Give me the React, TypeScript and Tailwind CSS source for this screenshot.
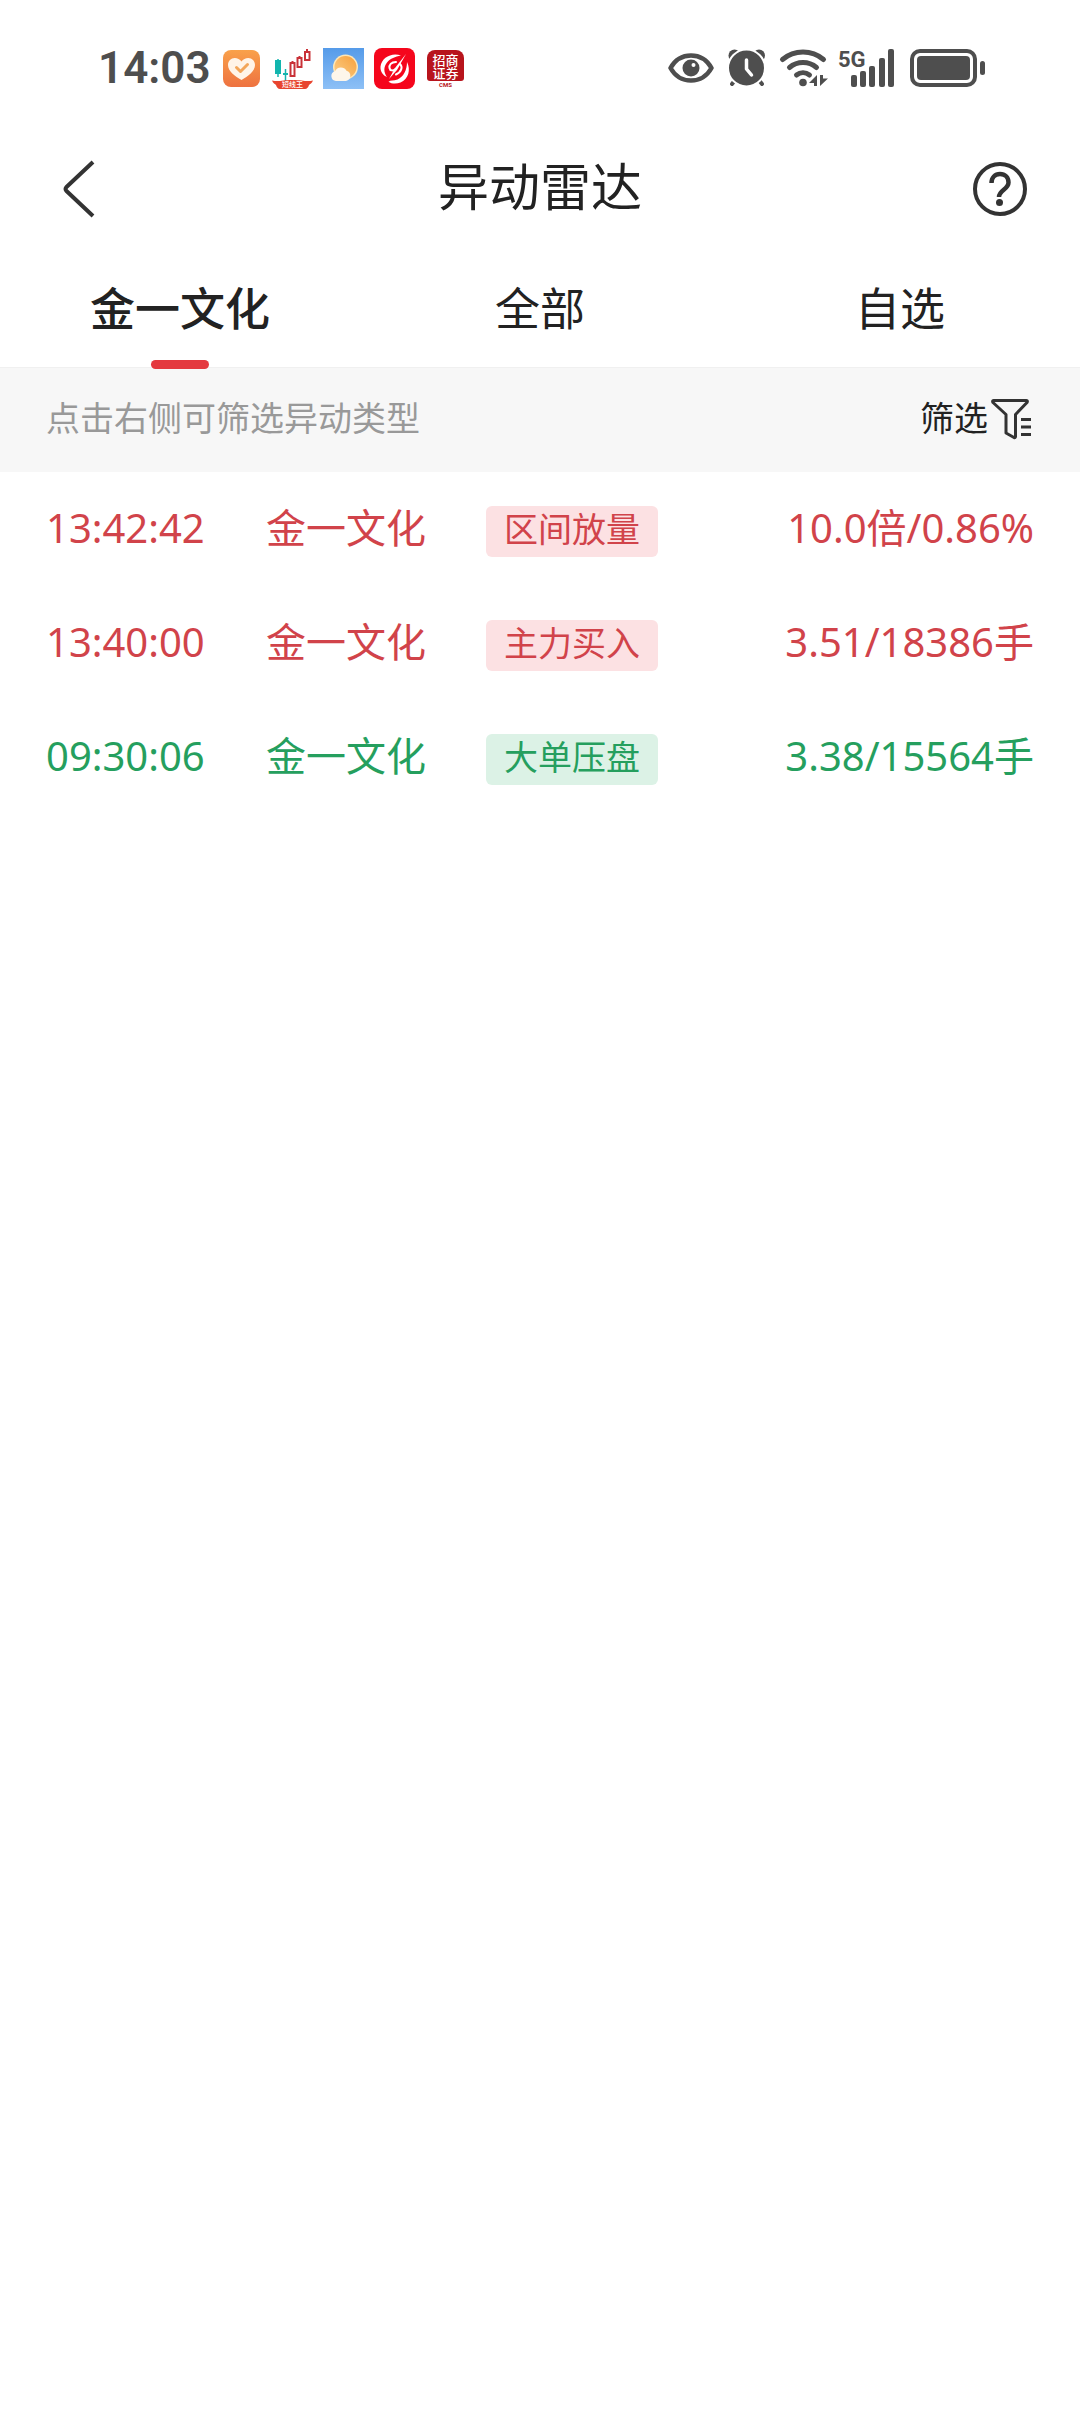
import { useState } from "react";

type Trend = "up" | "down";

interface RadarEvent {
  time: string;
  name: string;
  tag: string;
  value: string;
  trend: Trend;
}

const tabs = ["金一文化", "全部", "自选"];

const events: RadarEvent[] = [
  { time: "13:42:42", name: "金一文化", tag: "区间放量", value: "10.0倍/0.86%", trend: "up" },
  { time: "13:40:00", name: "金一文化", tag: "主力买入", value: "3.51/18386手", trend: "up" },
  { time: "09:30:06", name: "金一文化", tag: "大单压盘", value: "3.38/15564手", trend: "down" },
];

const textColor: Record<Trend, string> = {
  up: "text-[#d1434a]",
  down: "text-[#259f5e]",
};

const tagColor: Record<Trend, string> = {
  up: "bg-[#fce1e3]",
  down: "bg-[#dcf2e6]",
};

function HealthIcon() {
  return (
    <svg width="41" height="41" viewBox="0 0 41 41" aria-hidden="true">
      <defs>
        <linearGradient id="health" x1="0" y1="0" x2="0" y2="1">
          <stop offset="0" stopColor="#f9a14b" />
          <stop offset="1" stopColor="#ee7240" />
        </linearGradient>
      </defs>
      <rect x="2" y="2" width="37" height="37" rx="8" fill="url(#health)" />
      <path
        d="M20.5 32C14 28 7 23.5 7 17c0-4 3-7 6.7-7 2.8 0 5.2 1.3 6.8 3.6C22.1 11.3 24.5 10 27.3 10 31 10 34 13 34 17c0 6.5-7 11-13.5 15z"
        fill="#fff4e8"
      />
      <path d="M15.5 19.5l4 4 7-7" fill="none" stroke="#f3a65a" strokeWidth="3" strokeLinecap="round" strokeLinejoin="round" />
    </svg>
  );
}

function CandlesIcon() {
  return (
    <svg width="41" height="41" viewBox="0 0 41 41" aria-hidden="true">
      <path d="M6 11v18M13.5 21v12" stroke="#12b5ae" strokeWidth="1.5" />
      <rect x="3" y="12" width="6" height="14" fill="#12b5ae" />
      <path d="M11 26h5" stroke="#12b5ae" strokeWidth="2" />
      <g fill="#fff" stroke="#c93238" strokeWidth="2">
        <path d="M20.5 13v3M27.5 8v3M35 1v3" />
        <rect x="18.5" y="15" width="4" height="13" />
        <rect x="25.5" y="10" width="4" height="9" />
        <rect x="33" y="4" width="4.5" height="8" />
      </g>
      <path d="M0 32.5c7 1.5 10-.5 20.5-.5s13.5 2 20.5.5c-1 3-3 3.500-4 4.500-.5 2-2 4-4 4H8c-2 0-3.500-2-4-4-1-1-3-1.500-4-4.500z" fill="#e8452f" />
      <text x="20.5" y="39" fontSize="7" fontWeight="500" fill="#fff" textAnchor="middle">
        短线王
      </text>
    </svg>
  );
}

function WeatherIcon() {
  return (
    <svg width="41" height="41" viewBox="0 0 41 41" aria-hidden="true">
      <defs>
        <linearGradient id="sky" x1="0" y1="0" x2="0" y2="1">
          <stop offset="0" stopColor="#559be9" />
          <stop offset="1" stopColor="#8dc0f6" />
        </linearGradient>
        <linearGradient id="sun" x1="1" y1="0" x2="0" y2="1">
          <stop offset="0" stopColor="#f7a03c" />
          <stop offset="1" stopColor="#fbd08a" />
        </linearGradient>
      </defs>
      <rect width="41" height="41" fill="url(#sky)" />
      <circle cx="22.5" cy="19" r="12.5" fill="#fde7b8" />
      <circle cx="22.5" cy="19" r="11" fill="url(#sun)" />
      <path d="M13 33a5 5 0 0 1-1-9.8 6.5 6.5 0 0 1 11.5-.5 5.3 5.3 0 0 1-.5 10.3z" fill="#fdf6ea" />
    </svg>
  );
}

function FlashIcon() {
  return (
    <svg width="41" height="41" viewBox="0 0 41 41" aria-hidden="true">
      <rect width="41" height="41" rx="8" fill="#f5061c" />
      <g fill="#fff">
        <path d="M27 7.5C18 4 7.5 9.5 6.5 18.5c-.5 5 2.5 9 6.5 10.5-3.5-5-3.5-10 0-14.5S21 9 27 7.5z" />
        <path d="M33 14c4 8 1.5 17-6.5 20.5-4 1.7-9 1.5-12-.8 2-1.7 5-.7 9-2.2C29.5 29 33 22 33 14z" />
        <path d="M32 6L21 20l-6 11 8-9z" />
      </g>
      <g fill="none" stroke="#fff" strokeLinecap="round" strokeWidth="2">
        <path d="M22 14c-5 0-7 3-6.5 6s3.5 3 6 1" />
        <path d="M26 16c3 3 1.5 8-4 10.5" />
      </g>
    </svg>
  );
}

function BrokerIcon() {
  return (
    <svg width="41" height="41" viewBox="0 0 41 41" aria-hidden="true">
      <path d="M2 10a8 8 0 0 1 8-8h21a8 8 0 0 1 8 8v20a3 3 0 0 1-3 3H5a3 3 0 0 1-3-3z" fill="#b8141c" />
      <g fill="#fff" fontWeight="500" textAnchor="middle">
        <text x="20.5" y="17" fontSize="13">招商</text>
        <text x="20.5" y="30" fontSize="13">证券</text>
      </g>
      <text x="20.5" y="39" fontSize="6" fontWeight="700" fill="#b8141c" textAnchor="middle">
        CMS
      </text>
    </svg>
  );
}

function EyeIcon() {
  return (
    <svg width="46" height="38" viewBox="0 0 46 38" aria-hidden="true">
      <path d="M2.5 19C7 11 14 6.5 23 6.5S39 11 43.5 19C39 27 32 31.5 23 31.5S7 27 2.5 19z" fill="none" stroke="currentColor" strokeWidth="4.5" strokeLinejoin="round" />
      <circle cx="23" cy="19" r="8.5" fill="currentColor" />
      <circle cx="25.5" cy="16" r="2" fill="#fff" />
    </svg>
  );
}

function AlarmIcon() {
  return (
    <svg width="42" height="38" viewBox="0 0 42 38" aria-hidden="true">
      <path d="M12 30l-4 5M34 30l4 5" stroke="currentColor" strokeWidth="4" strokeLinecap="round" />
      <circle cx="10.5" cy="6.5" r="6" fill="currentColor" />
      <circle cx="35" cy="6.5" r="6" fill="currentColor" />
      <circle cx="22.5" cy="19" r="18.5" fill="currentColor" stroke="#fff" strokeWidth="2" />
      <path d="M22.5 11v9l5 6" fill="none" stroke="#fff" strokeWidth="3.5" strokeLinecap="round" strokeLinejoin="round" />
    </svg>
  );
}

function WifiIcon() {
  return (
    <svg width="52" height="38" viewBox="0 0 52 38" aria-hidden="true">
      <g fill="none" stroke="currentColor" strokeWidth="5" strokeLinecap="round">
        <path d="M6.5 10.5a32 32 0 0 1 41 0" />
        <path d="M13.5 18.5a21 21 0 0 1 27 0" />
        <path d="M20.5 26a10.5 10.5 0 0 1 13 0" />
      </g>
      <circle cx="27" cy="33.5" r="3.8" fill="currentColor" />
      <path d="M41 37V26l-8 8h5v3zM44 26v11l8-7.5h-5V26z" fill="currentColor" />
    </svg>
  );
}

function SignalIcon() {
  return (
    <svg width="62" height="50" viewBox="0 -6 62 50" aria-hidden="true">
      <text x="0" y="18" fontSize="22" fontWeight="700" fill="currentColor" fontFamily="Roboto, sans-serif">
        5G
      </text>
      <g fill="currentColor">
        <rect x="13" y="26" width="6" height="12" rx="2" />
        <rect x="22" y="22" width="6" height="16" rx="2" />
        <rect x="31" y="17" width="6" height="21" rx="2" />
        <rect x="41" y="9" width="6" height="29" rx="2" />
        <rect x="50" y="0" width="6" height="38" rx="2" />
      </g>
    </svg>
  );
}

function BatteryIcon() {
  return (
    <svg width="75" height="38" viewBox="0 0 75 38" aria-hidden="true">
      <rect x="2" y="2" width="63" height="34" rx="8" fill="none" stroke="currentColor" strokeWidth="4" />
      <rect x="7" y="7" width="53" height="24" rx="4" fill="currentColor" />
      <rect x="70" y="12" width="5" height="14" rx="2.5" fill="currentColor" />
    </svg>
  );
}

function StatusBar() {
  return (
    <div className="flex h-[136px] items-center justify-between pr-[95px] pl-[98px] text-[#4e4e4e]">
      <div className="flex items-center gap-[10px]">
        <time className="text-[44px] leading-none font-semibold">14:03</time>
        <HealthIcon />
        <CandlesIcon />
        <WeatherIcon />
        <FlashIcon />
        <BrokerIcon />
      </div>
      <div className="flex items-center gap-[10px]">
        <EyeIcon />
        <AlarmIcon />
        <WifiIcon />
        <SignalIcon />
        <BatteryIcon />
      </div>
    </div>
  );
}

function Header() {
  return (
    <header className="mb-[11px] flex h-[105px] items-center justify-between px-[52px]">
      <button type="button" aria-label="返回" className="w-[56px] pl-[11px]">
        <svg width="32" height="58" viewBox="0 0 32 58" fill="none" stroke="#333" strokeWidth="4">
          <path d="M30 2L3.5 27q-2 2 0 4L30 56" />
        </svg>
      </button>
      <h1 className="text-[51px] leading-none">异动雷达</h1>
      <button type="button" aria-label="帮助" className="flex w-[56px] justify-center">
        <svg width="56" height="56" viewBox="0 0 56 56" fill="none" stroke="#333" strokeWidth="4">
          <circle cx="28" cy="28" r="25" />
          <path d="M19.5 22c0-5.5 3.5-9 8.5-9s8.5 3.5 8.5 8.5c0 7-9.5 7.5-9.5 14.5" strokeWidth="4.5" />
          <circle cx="27.5" cy="41.5" r="3.5" fill="#333" stroke="none" />
        </svg>
      </button>
    </header>
  );
}

function FilterIcon() {
  return (
    <svg width="42" height="42" viewBox="0 0 42 42" fill="none" stroke="#333" strokeWidth="3" strokeLinejoin="round" aria-hidden="true">
      <path d="M3.5 2.5h33q1.5 0 .5 2L25.5 16.5V38.5q0 1.5-1.5 1L16 35V16.5L3 4.5q-1-2 .5-2z" />
      <path d="M31 21.500h10M31 29h10M31 36.500h10" />
    </svg>
  );
}

export default function App() {
  const [active, setActive] = useState(0);

  return (
    <div className="min-h-screen bg-white font-[Roboto,'Noto_Sans_CJK_SC',sans-serif] text-[#222]">
      <StatusBar />
      <Header />

      <nav className="grid grid-cols-3">
        {tabs.map((tab, i) => (
          <button
            key={tab}
            type="button"
            onClick={() => setActive(i)}
            className={`relative h-[115px] pt-[2px] text-[45px] leading-none ${i === active ? "font-medium" : ""}`}
          >
            {tab}
            {i === active && (
              <span className="absolute -bottom-[2px] left-1/2 h-[9px] w-[58px] -translate-x-1/2 rounded-full bg-[#e4393f]" />
            )}
          </button>
        ))}
      </nav>

      <div className="flex h-[105px] items-center justify-between border-t border-[#f0f0f0] bg-[#f7f7f7] pr-[48px] pb-[2px] pl-[46px] text-[34px] leading-none">
        <p className="text-[#999]">点击右侧可筛选异动类型</p>
        <button type="button" className="flex items-center gap-[2px]">
          筛选
          <FilterIcon />
        </button>
      </div>

      <div className="px-[46px]">
        <table className="w-full table-fixed font-['Noto_Sans','Noto_Sans_CJK_SC',sans-serif] text-[40px] leading-none">
          <tbody>
            {events.map((e) => (
              <tr key={e.time} className={`h-[114px] ${textColor[e.trend]}`}>
                <td className="w-[220px] pb-[3px]">{e.time}</td>
                <td className="w-[220px] pb-[3px]">{e.name}</td>
                <td className="pt-[4px]">
                  <span className={`inline-block rounded-[6px] px-[18px] pt-[6px] pb-[11px] text-[34px] leading-[34px] ${tagColor[e.trend]}`}>
                    {e.tag}
                  </span>
                </td>
                <td className="pb-[3px] text-right">{e.value}</td>
              </tr>
            ))}
          </tbody>
        </table>
      </div>
    </div>
  );
}
